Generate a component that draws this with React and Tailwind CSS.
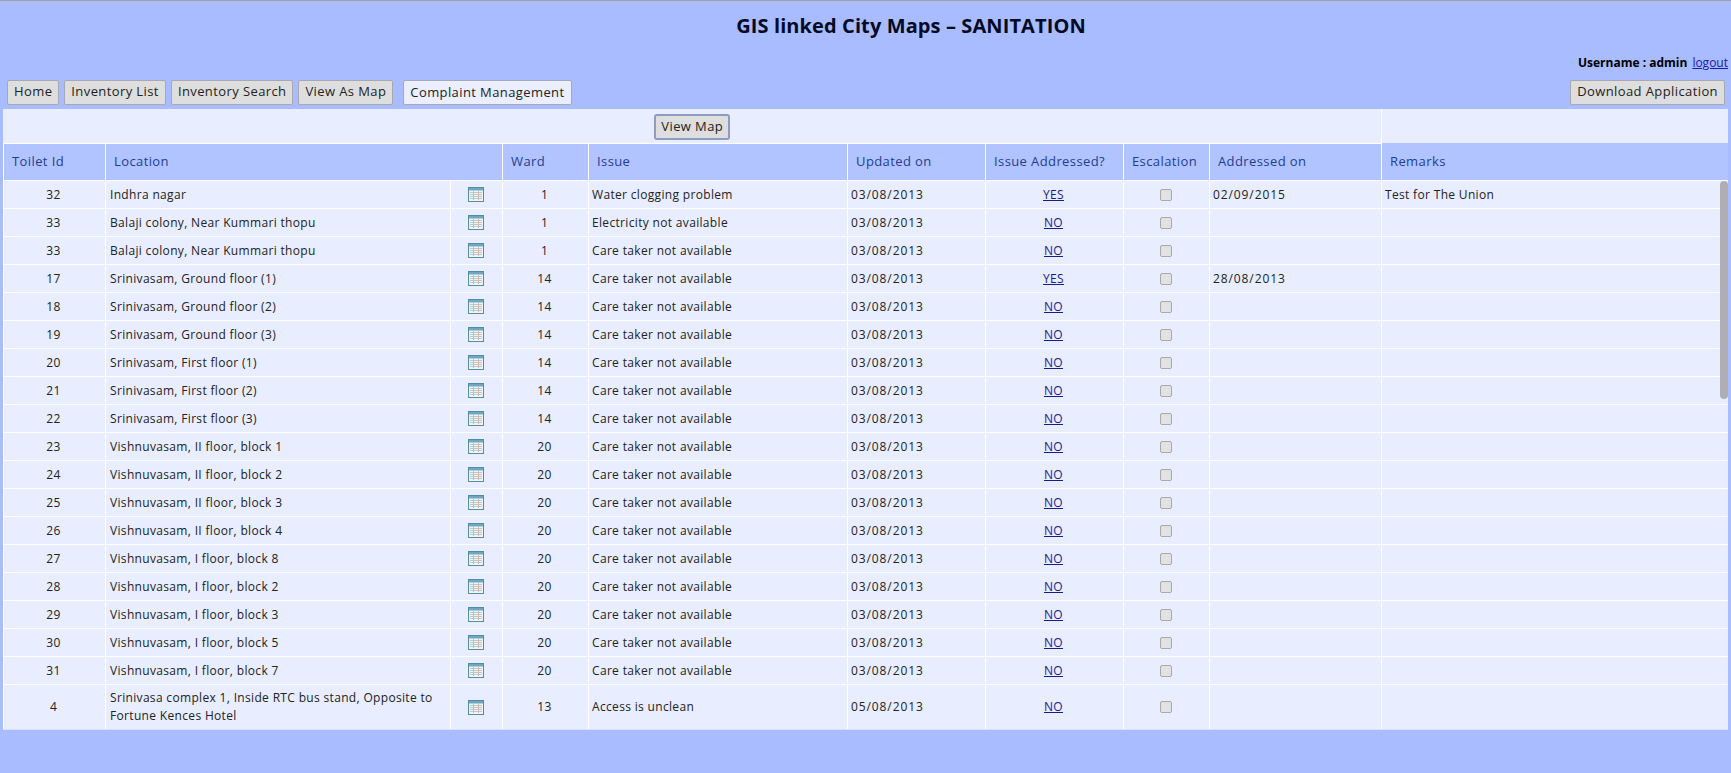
import React from "react";

const rows = [
  ["32", "Indhra nagar", "1", "Water clogging problem", "03/08/2013", "YES", "02/09/2015", "Test for The Union"],
  ["33", "Balaji colony, Near Kummari thopu", "1", "Electricity not available", "03/08/2013", "NO"],
  ["33", "Balaji colony, Near Kummari thopu", "1", "Care taker not available", "03/08/2013", "NO"],
  ["17", "Srinivasam, Ground floor (1)", "14", "Care taker not available", "03/08/2013", "YES", "28/08/2013"],
  ["18", "Srinivasam, Ground floor (2)", "14", "Care taker not available", "03/08/2013", "NO"],
  ["19", "Srinivasam, Ground floor (3)", "14", "Care taker not available", "03/08/2013", "NO"],
  ["20", "Srinivasam, First floor (1)", "14", "Care taker not available", "03/08/2013", "NO"],
  ["21", "Srinivasam, First floor (2)", "14", "Care taker not available", "03/08/2013", "NO"],
  ["22", "Srinivasam, First floor (3)", "14", "Care taker not available", "03/08/2013", "NO"],
  ["23", "Vishnuvasam, II floor, block 1", "20", "Care taker not available", "03/08/2013", "NO"],
  ["24", "Vishnuvasam, II floor, block 2", "20", "Care taker not available", "03/08/2013", "NO"],
  ["25", "Vishnuvasam, II floor, block 3", "20", "Care taker not available", "03/08/2013", "NO"],
  ["26", "Vishnuvasam, II floor, block 4", "20", "Care taker not available", "03/08/2013", "NO"],
  ["27", "Vishnuvasam, I floor, block 8", "20", "Care taker not available", "03/08/2013", "NO"],
  ["28", "Vishnuvasam, I floor, block 2", "20", "Care taker not available", "03/08/2013", "NO"],
  ["29", "Vishnuvasam, I floor, block 3", "20", "Care taker not available", "03/08/2013", "NO"],
  ["30", "Vishnuvasam, I floor, block 5", "20", "Care taker not available", "03/08/2013", "NO"],
  ["31", "Vishnuvasam, I floor, block 7", "20", "Care taker not available", "03/08/2013", "NO"],
  ["4", "Srinivasa complex 1, Inside RTC bus stand, Opposite to Fortune Kences Hotel", "13", "Access is unclean", "05/08/2013", "NO"],
];

function GridIcon() {
  return (
    <svg width="16" height="15" viewBox="0 0 16 15" className="block mx-auto">
      <rect x="0.5" y="0.5" width="15" height="14" fill="#f2f5f4" stroke="#4f8f9f" />
      <rect x="1" y="1" width="14" height="2.5" fill="#6fa6c4" />
      <path d="M2 5.5h12M2 7.5h12M2 9.5h12M2 11.5h12" stroke="#b9c8cf" strokeWidth="1" />
      <path d="M5.5 4v9M10.5 4v9" stroke="#d2b9b0" strokeWidth="1" />
    </svg>
  );
}

function NavButton({ children, light }) {
  return (
    <button
      className={
        "h-[25px] px-[6px] rounded-[2px] border border-[#a8a8b0] text-[13px] text-[#222] whitespace-nowrap tracking-[0.4px] " +
        (light ? "bg-[#eaeefd]" : "bg-[#dedede]")
      }
    >
      {children}
    </button>
  );
}

const th = "border border-white bg-[#b1c4ff] text-left font-normal text-[13px] text-[#1f3d96] pl-2 tracking-[0.4px]";
const td = "border border-white text-[12px] text-[#222] tracking-[0.33px] leading-[18px] pt-[1px]";
const dateTd = "border border-white text-[12px] text-[#222] tracking-[0.9px] leading-[18px] pt-[1px] px-[3px]";

export default function App() {
  return (
    <div className="h-[773px] bg-[#a9bcff] border-t border-[#a0a0a0] overflow-hidden font-['Open_Sans',sans-serif] flex flex-col">
      <div className="h-[108px] flex flex-col shrink-0">
        <h1 className="text-center text-[20px] font-bold text-[#050a24] tracking-[0.1px] mt-[13px] leading-[23px] pl-[91px]">
          GIS linked City Maps – SANITATION
        </h1>
        <div className="flex justify-end items-center gap-[5px] mt-[18px] h-[16px] pr-[3px] text-[12px]">
          <span className="font-bold text-black">Username : admin</span>
          <a href="#" className="underline text-[#1a1ab0]">logout</a>
        </div>
        <div className="flex items-center justify-between mt-[8px] px-[7px] pr-[6px]">
          <div className="flex items-center gap-[5px]">
            <NavButton>Home</NavButton>
            <NavButton>Inventory List</NavButton>
            <NavButton>Inventory Search</NavButton>
            <NavButton>View As Map</NavButton>
            <div className="ml-[5px]">
              <NavButton light>Complaint Management</NavButton>
            </div>
          </div>
          <NavButton>Download Application</NavButton>
        </div>
      </div>

      <div className="relative ml-[3px] w-[1725px] h-[621px] shrink-0 bg-[#e8eeff] border-b border-[#dbe3fa] overflow-hidden">
        <table className="table-fixed border-collapse w-[1725px]">
          <colgroup>
            <col className="w-[102px]" />
            <col className="w-[345px]" />
            <col className="w-[52px]" />
            <col className="w-[86px]" />
            <col className="w-[259px]" />
            <col className="w-[138px]" />
            <col className="w-[138px]" />
            <col className="w-[86px]" />
            <col className="w-[172px]" />
            <col className="w-[347px]" />
          </colgroup>
          <thead>
            <tr className="h-[34px]">
              <th colSpan={9} className="border-r border-white p-0 pt-[2px] text-center font-normal">
                <button className="h-[26px] w-[76px] rounded-[3px] border-2 border-[#8c9cc4] bg-[#dedede] text-[13px] text-[#222] tracking-[0.4px]">
                  View Map
                </button>
              </th>
              <th className="border-b border-[#b1c4ff]" />
            </tr>
            <tr className="h-[37px]">
              <th className={th}>Toilet Id</th>
              <th colSpan={2} className={th}>Location</th>
              <th className={th}>Ward</th>
              <th className={th}>Issue</th>
              <th className={th}>Updated on</th>
              <th className={th}>Issue Addressed?</th>
              <th className={th}>Escalation</th>
              <th className={th}>Addressed on</th>
              <th className={th}>Remarks</th>
            </tr>
          </thead>
          <tbody>
            {rows.map((r, i) => (
              <tr key={i} className={i === 18 ? "h-[45px]" : "h-[28px]"}>
                <td className={td + " text-center pl-[3px] pr-[5px]"}>{r[0]}</td>
                <td className={td + " pl-[4px] pr-[3px]"}>{r[1]}</td>
                <td className={td + " pl-[3px] pr-[5px]"}><GridIcon /></td>
                <td className={td + " text-center pl-[3px] pr-[5px]"}>{r[2]}</td>
                <td className={td + " px-[3px]"}>{r[3]}</td>
                <td className={dateTd}>{r[4]}</td>
                <td className={td + " text-center pl-[3px] pr-[5px]"}>
                  <a href="#" className="underline text-[#1a1a90]">{r[5]}</a>
                </td>
                <td className={td + " pl-[3px] pr-[5px]"}>
                  <span className="block mx-auto w-[12px] h-[12px] rounded-[2px] border border-[#a9a9a9] bg-[#e2e2e2]" />
                </td>
                <td className={dateTd}>{r[6]}</td>
                <td className={td + " px-[3px]"}>{r[7]}</td>
              </tr>
            ))}
          </tbody>
        </table>
        <div className="absolute right-0 top-[72px] w-[8px] h-[218px] rounded-[4px] bg-[#aeaeb4]" />
      </div>
    </div>
  );
}
